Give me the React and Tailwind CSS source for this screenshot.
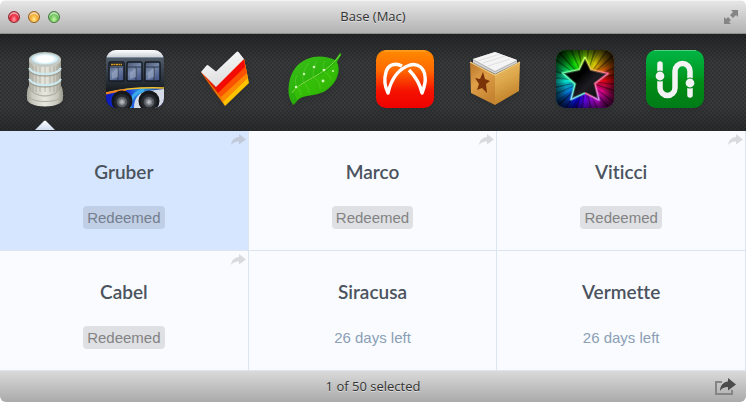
import { useState } from "react";

const DatabaseIcon = () => (
  <svg viewBox="0 0 58 58" className="size-[58px] drop-shadow-md" aria-hidden="true">
    <defs>
      <linearGradient id="stone">
        <stop offset="0" stopColor="#a3a298" />
        <stop offset="0.15" stopColor="#cbcabf" />
        <stop offset="0.5" stopColor="#e9e8df" />
        <stop offset="0.85" stopColor="#c6c5ba" />
        <stop offset="1" stopColor="#98978c" />
      </linearGradient>
      <radialGradient id="stoneTop">
        <stop offset="0.6" stopColor="#ffffff" />
        <stop offset="1" stopColor="#bfe3ee" />
      </radialGradient>
    </defs>
    <path d="M11 43c0-3 1-6 3-9h30c2 3 3 6 3 9v6c0 4-8 7.500-18 7.500S11 53 11 49z" fill="url(#stone)" />
    <path d="M11 45c1 4 9 6.500 18 6.500S46 49 47 45" fill="none" stroke="#aeada2" strokeWidth="1" />
    <path d="M13 37c3 6 9 9 16 9s13-3 16-9" fill="none" stroke="#a5a499" strokeWidth="1.500" opacity="0.7" />
    <path d="M13 9h32v28c0 4-7 7-16 7s-16-3-16-7z" fill="url(#stone)" />
    {[17, 20, 24, 29, 34, 38, 41].map((x) => (
      <path key={x} d={`M${x} 16V42`} stroke="#a3a298" strokeWidth="1.200" opacity="0.6" />
    ))}
    {[18, 29].map((y) => (
      <g key={y} fill="none">
        <path d={`M13 ${y + 2}c2 4 8 6 16 6s14-2 16-6`} stroke="#99988d" strokeWidth="1.500" opacity="0.8" />
        <path d={`M13 ${y}c2 4 8 6 16 6s14-2 16-6`} stroke="#cdeaf0" strokeWidth="2" />
      </g>
    ))}
    <ellipse cx="29" cy="9.500" rx="16" ry="7.500" fill="#c3c8c2" />
    <ellipse cx="29" cy="9" rx="13.500" ry="5.500" fill="url(#stoneTop)" />
  </svg>
);

const BusIcon = () => (
  <svg viewBox="0 0 58 58" className="size-[58px] drop-shadow-md" aria-hidden="true">
    <defs>
      <clipPath id="busClip">
        <rect width="58" height="58" rx="10" />
      </clipPath>
      <linearGradient id="busBody" x2="0" y2="1">
        <stop offset="0" stopColor="#5f6b7a" />
        <stop offset="0.4" stopColor="#343e4a" />
        <stop offset="0.7" stopColor="#171b20" />
      </linearGradient>
      <linearGradient id="busGlass" x2="0.6" y2="1">
        <stop offset="0" stopColor="#46546a" />
        <stop offset="0.5" stopColor="#7688ab" />
        <stop offset="1" stopColor="#4a5a8a" />
      </linearGradient>
      <linearGradient id="busRoof" x2="0" y2="1">
        <stop offset="0" stopColor="#ffffff" />
        <stop offset="1" stopColor="#ccd2d9" />
      </linearGradient>
      <linearGradient id="busBlue">
        <stop offset="0" stopColor="#0b19b5" />
        <stop offset="0.4" stopColor="#1b3fd8" />
        <stop offset="0.6" stopColor="#2c9ae8" />
        <stop offset="1" stopColor="#26348e" />
      </linearGradient>
      <radialGradient id="busHub">
        <stop offset="0" stopColor="#c8ccd0" />
        <stop offset="0.6" stopColor="#777c82" />
        <stop offset="1" stopColor="#3d4147" />
      </radialGradient>
    </defs>
    <g clipPath="url(#busClip)">
      <rect width="58" height="58" fill="url(#busBody)" />
      <rect width="58" height="7" fill="url(#busRoof)" />
      <path d="M0 7.500h58" stroke="#7c8998" />
      {[3, 21, 39].map((x) => (
        <g key={x}>
          <rect x={x} y="12" width="15" height="19" rx="1.500" fill="url(#busGlass)" stroke="#151a22" strokeWidth="1.500" />
          <path d={`M${x + 1} 17h13M${x + 9} 17v13`} stroke="#2c3748" strokeWidth="1" />
          <path d={`M${x + 3} 29v-6l6-5v9z`} fill="#b1bdd2" opacity="0.45" />
        </g>
      ))}
      <rect x="4" y="13" width="13" height="3" fill="#20242a" />
      <path d="M5 14.500h11" stroke="#dfa11c" strokeWidth="1.500" strokeDasharray="2 0.500" />
      <path d="M0 43c16-4 34-6 58-5v20H0z" fill="url(#busBlue)" />
      <path d="M28 58c0-10 5-16 14-17l16-2v19z" fill="#d5dbe6" />
      <path d="M24 58c0-10 5-16 14-18" fill="none" stroke="#3cabe9" strokeWidth="3" />
      <path d="M0 43c16-4 34-6 58-5" fill="none" stroke="#efc02c" strokeWidth="1.500" />
      <path d="M0 43.500c8-2 13-3 20-3.500" fill="none" stroke="#ef7d25" strokeWidth="2" />
      {[16, 43].map((x) => (
        <g key={x}>
          <circle cx={x} cy="51" r="10.500" fill="#15171a" />
          <circle cx={x} cy="52" r="8" fill="#25282c" />
          <circle cx={x} cy="52" r="5.500" fill="url(#busHub)" />
          <circle cx={x} cy="52" r="3.500" fill="none" stroke="#4a4e54" strokeDasharray="1 1" />
        </g>
      ))}
    </g>
  </svg>
);

const CheckIcon = () => (
  <svg viewBox="0 0 58 58" className="size-[58px] drop-shadow-md" aria-hidden="true">
    <defs>
      <linearGradient id="tickTop" x2="0.3" y2="1">
        <stop offset="0" stopColor="#ffffff" />
        <stop offset="1" stopColor="#dcdcdc" />
      </linearGradient>
    </defs>
    <path d="M5 22L29 56 53 33 48 9 20 36z" fill="#fdc200" />
    <path d="M5 22L27 52 52 28 48 9 20 36z" fill="#fd8b00" />
    <path d="M5 22L25 47 51 23 48 9 20 36z" fill="#fb5200" />
    <path d="M5 22L22 43 49 17 48 9 20 36z" fill="#f30a00" />
    <path d="M5 22L20 37 29 56 16 40z" fill="#c93a00" opacity="0.35" />
    <path d="M5 22l5.500-6.500q1-1 2 0L20 21.500 40.500 2q1-1 2 0L48 9 20 37z" fill="url(#tickTop)" />
  </svg>
);

const LeafIcon = () => (
  <svg viewBox="0 0 58 58" className="size-[58px] drop-shadow-md" aria-hidden="true">
    <defs>
      <linearGradient id="leafFill" x2="0.7" y2="1">
        <stop offset="0" stopColor="#3fc41c" />
        <stop offset="0.5" stopColor="#2db40d" />
        <stop offset="1" stopColor="#1f9c04" />
      </linearGradient>
    </defs>
    <path
      d="M7 55C4 50 2 45 2.500 39 3 25 9 14 21 9c9-4 20-3 28 1l5-7 1.500 1L51 12c3 6 2 14-3 21-6 8-13 11-21 12-7 1-12 2-15 5-2 2-3 4-5 5z"
      fill="url(#leafFill)"
    />
    <path d="M8 41C16 31 38 28 50 12c3 6 2 14-3 21-6 8-13 11-21 12-7 1-12 2-15 5z" fill="#4fe000" opacity="0.3" />
    <g fill="none" stroke="#6fdc3a" opacity="0.5" strokeWidth="0.800">
      <path d="M17 32c-1-7 1-13 6-19M27 27c0-6 1-11 4-16M37 21c0-4 0-7 2-10M17 32c4 4 6 7 6 11M27 27c5 3 7 6 7 12M37 21c4 2 7 5 8 9M11 37c-2-4-2-8 0-12M11 37c3 3 4 5 4 8" />
    </g>
    <path d="M6 43C14 30 37 28 54 5" fill="none" stroke="#7fdc45" strokeWidth="1" />
    <g fill="#cff7b7">
      <circle cx="28" cy="17" r="1.300" />
      <circle cx="18" cy="24" r="1.200" />
      <circle cx="38" cy="20" r="1.300" />
      <circle cx="47" cy="21" r="1" />
      <circle cx="37" cy="31" r="1.400" />
      <circle cx="10" cy="37" r="1.200" />
    </g>
  </svg>
);

const ArcsIcon = () => (
  <svg viewBox="0 0 58 58" className="size-[58px] drop-shadow-md" aria-hidden="true">
    <defs>
      <linearGradient id="arcsFill" x2="0" y2="1">
        <stop offset="0" stopColor="#ff8a00" />
        <stop offset="0.35" stopColor="#ff6a00" />
        <stop offset="0.7" stopColor="#f51300" />
        <stop offset="1" stopColor="#ee0000" />
      </linearGradient>
    </defs>
    <rect width="58" height="58" rx="10" fill="url(#arcsFill)" />
    <path d="M8 1h42" stroke="#ffc04d" strokeWidth="1" opacity="0.6" />
    <g fill="none" stroke="#ffffff" strokeWidth="3.400" strokeLinejoin="round">
      <path d="M26 16C19 12 12 15 10 22c-2 7-1 15 2 21 3-13 10-24 22-28 8-2 14 3 15 11 1 6-1 12-3 17-2-9-6-16-13-23" />
    </g>
  </svg>
);

const BoxIcon = () => (
  <svg viewBox="0 0 58 58" className="size-[58px] drop-shadow-md" aria-hidden="true">
    <defs>
      <linearGradient id="boxLeft" x2="0.500" y2="1">
        <stop offset="0" stopColor="#b9752a" />
        <stop offset="0.5" stopColor="#de9f48" />
        <stop offset="1" stopColor="#c58431" />
      </linearGradient>
      <linearGradient id="boxRight" x2="0.300" y2="1">
        <stop offset="0" stopColor="#ecc26d" />
        <stop offset="0.5" stopColor="#dda64a" />
        <stop offset="1" stopColor="#bf8029" />
      </linearGradient>
    </defs>
    <path d="M4 12l25 13v30L5 43z" fill="url(#boxLeft)" />
    <path d="M54 12L29 25v30l24-14z" fill="url(#boxRight)" />
    <path d="M4 12l25 13 25-13" fill="none" stroke="#f2d187" strokeWidth="1.200" />
    <path d="M7 9l22-7 22 8v3L29 24 7 13z" fill="#b9b9b9" />
    <path d="M7 9l22-7 22 8-22 11z" fill="#f4f4f4" />
    <path d="M12 11l22-7M17 13l22-7M22 16l22-7" stroke="#d9d9d9" strokeWidth="0.800" />
    <path d="M7 11l22 12 22-11" fill="none" stroke="#e8e8e8" strokeWidth="0.800" />
    <path d="M17 22l2 7 5 2-4 3 1 9-5-5-5 2 2-6-4-6 5 1z" fill="#7a3208" />
  </svg>
);

// green at the top, then yellow, red, violet and cyan clockwise
const rays = Array.from({ length: 60 }, (_, i) => ({
  angle: i * 6,
  hue: (85 - i * 6 + 360) % 360,
  strength: [0.9, 0.6, 0.8, 0.5, 0.75][i % 5],
}));

const StarIcon = () => (
  <svg viewBox="0 0 58 58" className="size-[58px] drop-shadow-md" aria-hidden="true">
    <defs>
      <clipPath id="starClip">
        <rect width="58" height="58" rx="10" />
      </clipPath>
      <radialGradient id="starFade">
        <stop offset="0.500" stopColor="#000000" stopOpacity="0" />
        <stop offset="0.75" stopColor="#000000" stopOpacity="0.55" />
        <stop offset="1" stopColor="#000000" stopOpacity="0.95" />
      </radialGradient>
      <linearGradient id="starBody" y2="1">
        <stop offset="0" stopColor="#10130c" />
        <stop offset="0.4" stopColor="#000000" />
        <stop offset="0.6" stopColor="#1c1c22" />
        <stop offset="1" stopColor="#050508" />
      </linearGradient>
      <linearGradient id="starEdge" x1="0.2" y1="0" x2="0.7" y2="1">
        <stop offset="0" stopColor="#c8f040" />
        <stop offset="0.35" stopColor="#ffb060" />
        <stop offset="0.6" stopColor="#ff6f9c" />
        <stop offset="1" stopColor="#c990ff" />
      </linearGradient>
      <linearGradient id="starEdgeCool" x1="0.5" x2="0.2" y2="1">
        <stop offset="0" stopColor="#c8ff60" />
        <stop offset="0.5" stopColor="#5fffb5" />
        <stop offset="1" stopColor="#8cdcff" />
      </linearGradient>
    </defs>
    <g clipPath="url(#starClip)">
      <rect width="58" height="58" fill="#000000" />
      {rays.map((ray) => (
        <path
          key={ray.angle}
          d="M29 31L26 -14H32z"
          transform={`rotate(${ray.angle} 29 31)`}
          fill={`hsl(${ray.hue} 95% 48%)`}
          opacity={ray.strength}
        />
      ))}
      <rect x="-10" y="-8" width="78" height="78" fill="url(#starFade)" />
      <path d="M29 7l6 12.500 17 4-13 10L43 50l-14-7-14 6.500L19 34 6.500 23 23 19.500z" fill="url(#starBody)" />
      <g fill="none" strokeLinejoin="round">
        <path d="M29 7l6 12.500 17 4-13 10L43 50l-14-7" stroke="url(#starEdge)" strokeWidth="3" opacity="0.35" />
        <path d="M29 43l-14 6.500L19 34 6.500 23 23 19.500 29 7" stroke="url(#starEdgeCool)" strokeWidth="3" opacity="0.35" />
        <path d="M29 7l6 12.500 17 4-13 10L43 50l-14-7" stroke="url(#starEdge)" strokeWidth="1.200" />
        <path d="M29 43l-14 6.500L19 34 6.500 23 23 19.500 29 7" stroke="url(#starEdgeCool)" strokeWidth="1.200" />
      </g>
    </g>
  </svg>
);

const TransitIcon = () => (
  <svg viewBox="0 0 58 58" className="size-[58px] drop-shadow-md" aria-hidden="true">
    <defs>
      <linearGradient id="transitFill" x2="0" y2="1">
        <stop offset="0" stopColor="#00b545" />
        <stop offset="0.45" stopColor="#009a24" />
        <stop offset="0.55" stopColor="#008c14" />
        <stop offset="1" stopColor="#007c18" />
      </linearGradient>
    </defs>
    <rect width="58" height="58" rx="10" fill="url(#transitFill)" />
    <path d="M8 0.500h42" stroke="#6fdc93" opacity="0.7" />
    <path
      d="M14 14V38a7.500 7.500 0 0 0 15 0V21a7.500 7.500 0 0 1 15 0V45"
      fill="none"
      stroke="#f3f3f3"
      strokeWidth="5.500"
      strokeLinecap="round"
    />
    <circle cx="14" cy="26" r="5" fill="#f3f3f3" stroke="#009320" strokeWidth="1.200" />
    <circle cx="44" cy="33" r="5" fill="#f3f3f3" stroke="#008c1c" strokeWidth="1.200" />
  </svg>
);

const ShareArrow = () => (
  <svg viewBox="0 0 15 11" className="w-[15px] h-[11px]" aria-hidden="true">
    <path d="M8 0l7 5.500-7 5V7.500C4.500 7.300 2 8.500 0 11c.5-4.500 3.500-7.700 8-8z" fill="currentColor" />
  </svg>
);

const apps = [
  { name: "Base (Mac)", Icon: DatabaseIcon },
  { name: "Bus", Icon: BusIcon },
  { name: "Check", Icon: CheckIcon },
  { name: "Leaf", Icon: LeafIcon },
  { name: "Arcs", Icon: ArcsIcon },
  { name: "Box", Icon: BoxIcon },
  { name: "Star", Icon: StarIcon },
  { name: "Transit", Icon: TransitIcon },
];

const codes = [
  { name: "Gruber", redeemed: true, status: "Redeemed" },
  { name: "Marco", redeemed: true, status: "Redeemed" },
  { name: "Viticci", redeemed: true, status: "Redeemed" },
  { name: "Cabel", redeemed: true, status: "Redeemed" },
  { name: "Siracusa", redeemed: false, status: "26 days left" },
  { name: "Vermette", redeemed: false, status: "26 days left" },
];

const TitleBar = ({ title }) => (
  <header className="grid grid-cols-[1fr_auto_1fr] items-center h-[34px] px-2 bg-linear-to-b from-[#e6e6e6] to-[#b2b2b2] border-t border-t-[#f4f4f4] border-b border-b-[#8b918d]">

    {/* Window buttons */}

    <div className="flex gap-2">
      <button aria-label="Close" className="size-3 rounded-full border border-[#8e2a30] bg-radial-[at_50%_75%] from-[#ff9ba0] via-[#e8253b] to-[#b81527] shadow-[inset_0_2px_1px_#ffffff99]" />
      <button aria-label="Minimize" className="size-3 rounded-full border border-[#99601e] bg-radial-[at_50%_75%] from-[#ffe98c] via-[#f5ac35] to-[#c97a18] shadow-[inset_0_2px_1px_#ffffff99]" />
      <button aria-label="Zoom" className="size-3 rounded-full border border-[#467a3b] bg-radial-[at_50%_75%] from-[#c8f5a5] via-[#6ec45c] to-[#3f9337] shadow-[inset_0_2px_1px_#ffffff99]" />
    </div>

    <h1 className="font-['Open_Sans',sans-serif] text-[13px] text-[#333333] [text-shadow:0_1px_0_#ffffff80]">{title}</h1>

    <button aria-label="Full screen" className="justify-self-end text-[#858585]">
      <svg viewBox="0 0 14 14" className="size-3.5" aria-hidden="true">
        <path d="M7 0h7v7l-2-2-3 3-3-3 3-3zM0 7l2 2 2-2 3 3-2 2 2 2H0z" fill="currentColor" />
      </svg>
    </button>

  </header>
);

const AppBar = ({ selected, onSelect }) => (
  <nav className="h-[97px] overflow-hidden bg-[#37393b] bg-[linear-gradient(to_bottom,#00000059,transparent_30%,transparent_75%,#00000040),conic-gradient(#00000024_25%,transparent_0_50%,#00000024_0_75%,transparent_0)] bg-size-[100%_100%,4px_4px] border-b border-[#29292b]">
    <ul className="flex h-full">
      {apps.map(({ name, Icon }, i) => (
        <li key={name} className="w-[90px]">
          <button
            aria-label={name}
            aria-pressed={i === selected}
            onClick={() => onSelect(i)}
            className="flex flex-col items-center justify-between w-full h-full pt-4"
          >
            <Icon />
            {i === selected && (
              <svg viewBox="0 0 20 10" className="w-5 h-2.5" aria-hidden="true">
                <defs>
                  <linearGradient id="pointer" x2="0" y2="1">
                    <stop offset="0" stopColor="#ffffff" />
                    <stop offset="1" stopColor="#cfdcee" />
                  </linearGradient>
                </defs>
                <path d="M0 10L9 1q1-1 2 0l9 9z" fill="url(#pointer)" />
              </svg>
            )}
          </button>
        </li>
      ))}
    </ul>
  </nav>
);

const CodeCell = ({ code, selected, onSelect }) => (
  <li
    onClick={onSelect}
    className={`relative flex flex-col items-center gap-5 h-[120px] pt-[27px] border-r border-b border-[#dce5f0]
      ${selected ? "bg-[#d6e6ff]" : "bg-[#f9fbff]"}
    `}
  >

    {code.redeemed && (
      <button
        aria-label={`Share ${code.name}`}
        className={`absolute top-[3px] right-0.5 ${selected ? "text-[#c0cad8]" : "text-[#d9dadc]"}`}
      >
        <ShareArrow />
      </button>
    )}

    <h2 className="font-['Lato',sans-serif] font-semibold text-[19px] leading-7 text-[#4b535e] [font-variant-ligatures:none]">
      {code.name}
    </h2>

    {code.redeemed ? (
      <span className={`px-1 pt-px rounded-sm text-[15px] leading-[22px] ${selected ? "bg-[#c0cee6] text-[#757e8d]" : "bg-[#dfe0e4] text-[#838383]"}`}>
        {code.status}
      </span>
    ) : (
      <span className="px-1 pt-px text-[15px] leading-[22px] text-[#8b9fb6]">{code.status}</span>
    )}

  </li>
);

const StatusBar = ({ count }) => (
  <footer className="grid grid-cols-[1fr_auto_1fr] items-center h-8 px-2.5 bg-linear-to-b from-[#dadada] to-[#aaaaaa] border-t border-[#777777]">

    <p className="col-start-2 font-['Open_Sans',sans-serif] text-[13px] text-[#333333] [text-shadow:0_1px_0_#ffffff80]">
      {count} of 50 selected
    </p>

    <button aria-label="Share" className="justify-self-end">
      <svg viewBox="0 0 22 18" className="w-[22px] h-[18px]" aria-hidden="true">
        <path d="M8 4H2v12h16v-4" fill="none" stroke="#858585" strokeWidth="2" />
        <path d="M14 0l8 6.500-8 6V9c-4 0-6 1-8 4 0-5 3-9 8-9.500z" fill="#4b4b4b" />
      </svg>
    </button>

  </footer>
);

const App = () => {

  const [app, setApp] = useState(0);
  const [cell, setCell] = useState(0);

  return (

    <div className="flex flex-col min-h-screen bg-[#f9fbff] rounded-md overflow-hidden font-['Liberation_Sans',Arial,sans-serif]">

      <TitleBar title={apps[app].name} />

      <AppBar selected={app} onSelect={setApp} />

      <main className="flex-1 -mb-px">
        <ul className="grid grid-cols-3">
          {codes.map((code, i) => (
            <CodeCell
              key={code.name}
              code={code}
              selected={i === cell}
              onSelect={() => setCell(i)}
            />
          ))}
        </ul>
      </main>

      <StatusBar count={1} />

    </div>

  );

};

export default App;
